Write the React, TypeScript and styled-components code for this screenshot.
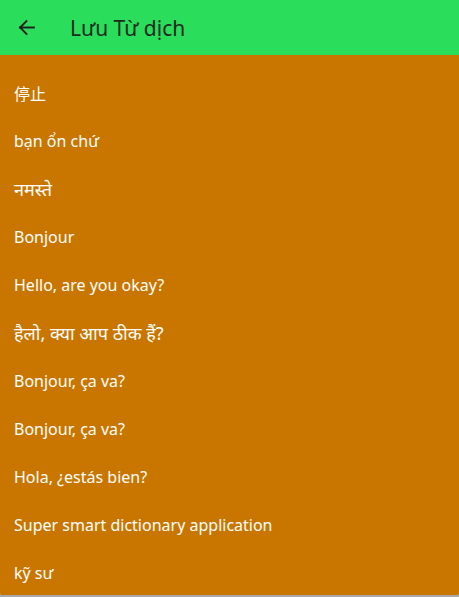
import React from "react";
import styled, { createGlobalStyle } from "styled-components";

const Global = createGlobalStyle`
  html, body { margin: 0; padding: 0; background: #a8a8a8; }
  body { font-family: "Noto Sans", "Open Sans", "Noto Sans CJK SC", sans-serif; }
`;

const Page = styled.div`
  width: 459px;
  height: 595px;
  background: #c97600;
  display: flex;
  flex-direction: column;
  overflow: hidden;
  border-radius: 0 0 2px 2px;
`;

const AppBar = styled.header`
  height: 55px;
  flex: 0 0 55px;
  background: #2add5a;
  display: flex;
  align-items: center;
  padding-left: 17px;
  gap: 35px;
`;

const BackButton = styled.button`
  border: 0;
  background: transparent;
  padding: 0;
  width: 18px;
  height: 18px;
  display: flex;
  align-items: center;
  justify-content: center;
  color: #1e1e1e;
  cursor: pointer;
`;

const Title = styled.h1`
  margin: 0;
  font-size: 21px;
  font-weight: 400;
  color: #1f2a22;
`;

const List = styled.ul`
  list-style: none;
  margin: 0;
  padding: 14px 0 0;
`;

const Item = styled.li<{ $script?: boolean }>`
  height: 48px;
  display: flex;
  align-items: center;
  padding-left: 14px;
  color: #ffffff;
  font-size: ${(p) => (p.$script ? "18px" : "16px")};
  white-space: nowrap;
`;

const items: { text: string; script?: boolean }[] = [
  { text: "停止" },
  { text: "bạn ổn chứ" },
  { text: "नमस्ते", script: true },
  { text: "Bonjour" },
  { text: "Hello, are you okay?" },
  { text: "हैलो, क्या आप ठीक हैं?", script: true },
  { text: "Bonjour, ça va?" },
  { text: "Bonjour, ça va?" },
  { text: "Hola, ¿estás bien?" },
  { text: "Super smart dictionary application" },
  { text: "kỹ sư" },
];

export default function App() {
  return (
    <>
      <Global />
      <Page>
        <AppBar>
          <BackButton aria-label="Back">
            <svg width="17" height="17" viewBox="0 0 16 16" fill="none" stroke="currentColor" strokeWidth="1.8" strokeLinecap="square">
              <path d="M15 8H2" />
              <path d="M8 2L2 8l6 6" />
            </svg>
          </BackButton>
          <Title>Lưu Từ dịch</Title>
        </AppBar>
        <List>
          {items.map((it, i) => (
            <Item key={i} $script={it.script}>
              {it.text}
            </Item>
          ))}
        </List>
      </Page>
    </>
  );
}
